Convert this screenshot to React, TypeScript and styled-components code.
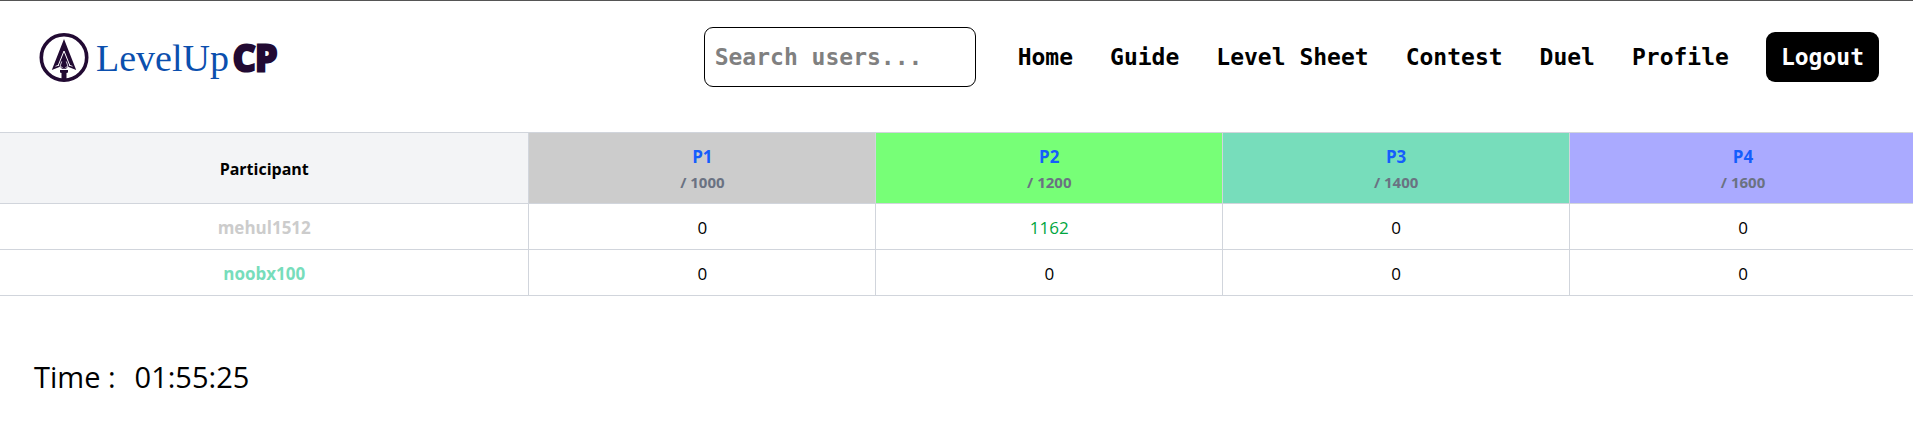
import React from "react";
import styled, { createGlobalStyle } from "styled-components";

const GlobalStyle = createGlobalStyle`
  *, *::before, *::after { box-sizing: border-box; }
  body {
    margin: 0;
    background: #fff;
    color: #000;
    font-family: "Segoe UI", "Open Sans", "Noto Sans", sans-serif;
    font-size: 17px;
    line-height: 27px;
    overflow-x: hidden;
  }
`;

const mono = `Consolas, "DejaVu Sans Mono", monospace`;

const Header = styled.header`
  display: flex;
  align-items: center;
  justify-content: space-between;
  padding: 26px 34px 45px 39px;
  border-top: 1px solid #555;
`;

const Brand = styled.a`
  display: flex;
  align-items: center;
  text-decoration: none;
`;

const BrandName = styled.span`
  margin-left: 7px;
  padding-top: 2px;
  font-family: "Liberation Serif", serif;
  font-size: 38px;
  line-height: 48px;
  color: #0b4fae;
`;

const BrandSuffix = styled.span`
  margin-left: 4px;
  padding-top: 2px;
  font-family: "Open Sans", sans-serif;
  font-size: 35px;
  font-weight: 700;
  line-height: 48px;
  color: #220a33;
  -webkit-text-stroke: 3px #220a33;
`;

const Actions = styled.div`
  display: flex;
  align-items: center;
  gap: 42px;
`;

const Search = styled.input`
  width: 272px;
  height: 60px;
  padding: 0 10px;
  border: 1px solid #000;
  border-radius: 9px;
  background: #fff;
  font: 700 23px ${mono};
  color: #000;
  &::placeholder { color: #808080; opacity: 1; }
`;

const Nav = styled.nav`
  display: flex;
  align-items: center;
  gap: 37px;
`;

const NavLink = styled.a`
  font: 700 23px/32px ${mono};
  color: #000;
  text-decoration: none;
  white-space: nowrap;
`;

const LogoutButton = styled.button`
  padding: 9px 15px;
  border: 0;
  border-radius: 9px;
  background: #000;
  color: #fff;
  font: 700 23px/32px ${mono};
`;

const Scores = styled.table`
  width: calc(100% + 4px);
  border-collapse: collapse;
  table-layout: fixed;
  text-align: center;
`;

const HeadCell = styled.th<{ $bg: string; $wide?: boolean }>`
  width: ${(p) => (p.$wide ? "27.6%" : "18.1%")};
  padding: 10px 9px 8px;
  border: 1px solid #d1d5dc;
  border-left-width: ${(p) => (p.$wide ? "0" : "1px")};
  background: ${(p) => p.$bg};
  font-size: 16px;
  font-weight: 700;
`;

const ProblemLink = styled.a`
  display: block;
  font-size: 17px;
  color: #155dfc;
  text-decoration: none;
`;

const Points = styled.div`
  font-size: 15px;
  line-height: 25px;
  color: #6a7282;
`;

const Name = styled.th<{ $color: string }>`
  padding: 10px 9px 8px;
  border: 1px solid #d1d5dc;
  border-left-width: 0;
  font-weight: 700;
  color: ${(p) => p.$color};
`;

const Score = styled.td<{ $solved: boolean }>`
  padding: 10px 9px 8px;
  border: 1px solid #d1d5dc;
  color: ${(p) => (p.$solved ? "#00a63e" : "#000")};
`;

const Timer = styled.div`
  display: flex;
  gap: 19px;
  padding: 59px 34px 0;
  font-size: 29px;
  line-height: 44px;
`;

const problems = [
  { id: "P1", points: 1000, color: "#cccccc" },
  { id: "P2", points: 1200, color: "#77ff77" },
  { id: "P3", points: 1400, color: "#77ddbb" },
  { id: "P4", points: 1600, color: "#aaaaff" },
];

const participants = [
  { name: "mehul1512", color: "#cccccc", scores: [0, 1162, 0, 0] },
  { name: "noobx100", color: "#77ddbb", scores: [0, 0, 0, 0] },
];

const links = ["Home", "Guide", "Level Sheet", "Contest", "Duel", "Profile"];

function ArrowMark() {
  return (
    <svg width="50" height="50" viewBox="0 0 50 50" aria-hidden="true">
      <circle cx="25" cy="25.5" r="22.7" fill="none" stroke="#220a33" strokeWidth="3.6" />
      <path d="M25 7 L37.2 38 L29 34.8 L27 36.8 H23 L21 34.8 L12.8 38 Z" fill="#220a33" />
      <path d="M25 19 L19 34 M25 19 L31 34" fill="none" stroke="#fff" strokeWidth="1" />
      <path d="M22.7 29.5 L21 34.5 L23.6 35.5 M27.3 29.5 L29 34.5 L26.4 35.5" fill="none" stroke="#fff" strokeWidth="0.8" />
      <path d="M16.5 34.3 L20 33 M33.5 34.3 L30 33" stroke="#fff" strokeWidth="0.8" />
      <path d="M21 38 H29 V40.4 L27.5 41 V48 H22.5 V41 L21 40.4 Z" fill="#220a33" />
    </svg>
  );
}

export default function App() {
  return (
    <>
      <GlobalStyle />
      <Header>
        <Brand href="#">
          <ArrowMark />
          <BrandName>LevelUp</BrandName>
          <BrandSuffix>CP</BrandSuffix>
        </Brand>
        <Actions>
          <Search type="text" placeholder="Search users..." aria-label="Search users" />
          <Nav>
            {links.map((label) => (
              <NavLink key={label} href="#">{label}</NavLink>
            ))}
            <LogoutButton type="button">Logout</LogoutButton>
          </Nav>
        </Actions>
      </Header>
      <main>
        <Scores>
          <thead>
            <tr>
              <HeadCell scope="col" $bg="#f3f4f6" $wide>Participant</HeadCell>
              {problems.map((p) => (
                <HeadCell key={p.id} scope="col" $bg={p.color}>
                  <ProblemLink href="#">{p.id}</ProblemLink>
                  <Points>/ {p.points}</Points>
                </HeadCell>
              ))}
            </tr>
          </thead>
          <tbody>
            {participants.map((row) => (
              <tr key={row.name}>
                <Name scope="row" $color={row.color}>{row.name}</Name>
                {row.scores.map((score, i) => (
                  <Score key={problems[i].id} $solved={score > 0}>{score}</Score>
                ))}
              </tr>
            ))}
          </tbody>
        </Scores>
        <Timer>
          <span>Time :</span>
          <span>01:55:25</span>
        </Timer>
      </main>
    </>
  );
}
